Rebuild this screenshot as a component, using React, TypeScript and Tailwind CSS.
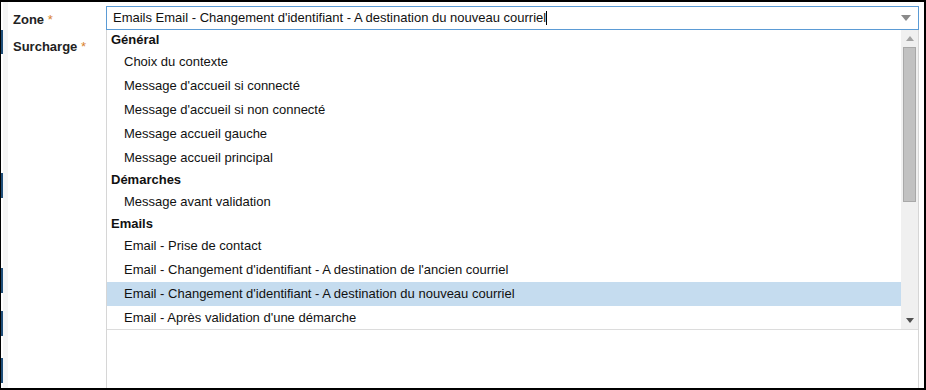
import React from "react";

const groups: { title: string; items: string[] }[] = [
  {
    title: "Général",
    items: [
      "Choix du contexte",
      "Message d'accueil si connecté",
      "Message d'accueil si non connecté",
      "Message accueil gauche",
      "Message accueil principal",
    ],
  },
  { title: "Démarches", items: ["Message avant validation"] },
  {
    title: "Emails",
    items: [
      "Email - Prise de contact",
      "Email - Changement d'identifiant - A destination de l'ancien courriel",
      "Email - Changement d'identifiant - A destination du nouveau courriel",
      "Email - Après validation d'une démarche",
    ],
  },
];

const SELECTED = "Email - Changement d'identifiant - A destination du nouveau courriel";

export default function App() {
  return (
    <div
      className="w-[926px] h-[390px] bg-white border-black border-t-2 border-r-2 border-b-2 border-l overflow-hidden flex text-[13px] text-[#222]"
      style={{ fontFamily: '"Liberation Sans", Arial, sans-serif' }}
    >
      {/* left marker strip */}
      <div className="w-[7px] h-full flex shrink-0">
        <div className="w-[2px] flex flex-col">
          <div className="h-[28px]" />
          <div className="h-[24px] bg-[#1f4e79]" />
          <div className="h-[119px]" />
          <div className="h-[25px] bg-[#1f4e79]" />
          <div className="h-[70px]" />
          <div className="h-[25px] bg-[#1f4e79]" />
          <div className="h-[18px]" />
          <div className="h-[25px] bg-[#1f4e79]" />
          <div className="h-[22px]" />
          <div className="h-[25px] bg-[#1f4e79]" />
        </div>
        <div className="w-[5px] bg-[#f5f5f5]" />
      </div>

      {/* labels */}
      <div className="w-[98px] shrink-0 pl-[5px] pt-[9px] font-bold text-[#222]">
        <div className="h-[18px] leading-[18px]">
          Zone <span className="text-[#d9822b] font-normal">*</span>
        </div>
        <div className="h-[18px] leading-[18px] mt-[9px]">
          Surcharge <span className="text-[#d9822b] font-normal">*</span>
        </div>
      </div>

      {/* field */}
      <div className="w-[813px] shrink-0 flex flex-col pt-[4px]">
        <div className="h-[24px] border border-[#5b9bd5] flex items-center pl-[6px] pr-[6px]">
          <span className="flex-1 text-[#111] whitespace-nowrap">
            Emails Email - Changement d'identifiant - A destination du nouveau courriel
            <span className="inline-block w-px h-[14px] bg-black align-middle -mt-[2px]" />
          </span>
          <svg width="10" height="6" viewBox="0 0 10 6" className="mr-[1px]">
            <path d="M0 0 H10 L5 6 Z" fill="#8a8a8a" />
          </svg>
        </div>
        <div className="flex-1 border-l border-r border-[#d6d6d6] flex flex-col">
          <div className="flex border-b border-[#dcdcdc] h-[300px]">
            <div className="flex-1 flex flex-col overflow-hidden">
              {groups.map((g) => (
                <React.Fragment key={g.title}>
                  <div className="h-[20px] leading-[20px] pl-[4px] font-bold text-[#111]">
                    {g.title}
                  </div>
                  {g.items.map((it) => (
                    <div
                      key={it}
                      className={
                        "h-[24px] leading-[24px] pl-[17px] whitespace-nowrap text-[#111] " +
                        (it === SELECTED ? "bg-[#c5dcef]" : "")
                      }
                    >
                      {it}
                    </div>
                  ))}
                </React.Fragment>
              ))}
            </div>
            <div className="w-[17px] bg-[#f0f0f0] flex flex-col items-center">
              <div className="h-[17px] flex items-center justify-center">
                <svg width="8" height="5" viewBox="0 0 8 5">
                  <path d="M0 5 H8 L4 0 Z" fill="#a3a3a3" />
                </svg>
              </div>
              <div className="w-[13px] h-[155px] bg-[#c1c1c1] border border-[#a8a8a8]" />
              <div className="flex-1" />
              <div className="h-[17px] flex items-center justify-center">
                <svg width="8" height="5" viewBox="0 0 8 5">
                  <path d="M0 0 H8 L4 5 Z" fill="#505050" />
                </svg>
              </div>
            </div>
          </div>
        </div>
      </div>
    </div>
  );
}
